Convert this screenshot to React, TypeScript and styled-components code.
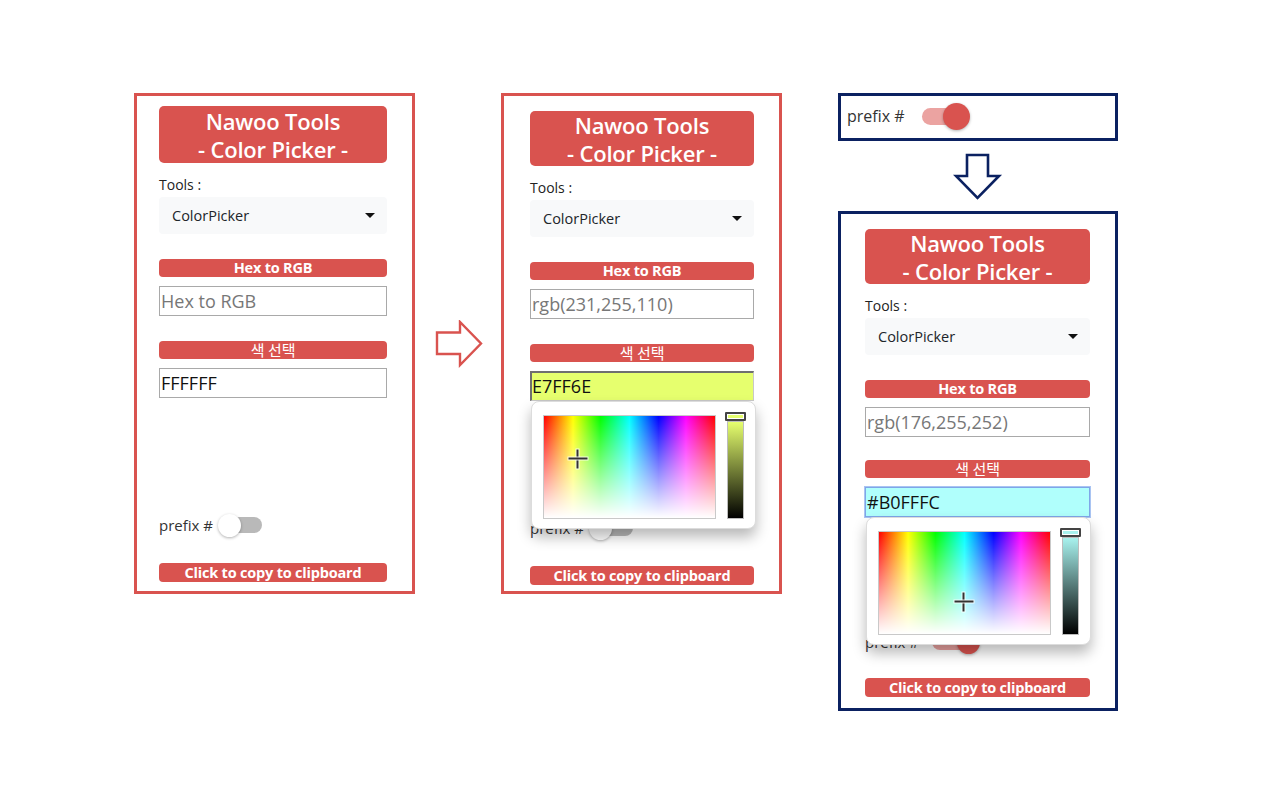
import React from "react";
import styled, { createGlobalStyle, css } from "styled-components";

const RED = "#d9534f";
const NAVY = "#0b2161";
const FONT = `"Open Sans", "Noto Sans CJK KR", sans-serif`;

const Global = createGlobalStyle`
  html, body { margin: 0; padding: 0; background: #ffffff; }
  body { font-family: ${FONT}; width: 1280px; height: 800px; overflow: hidden; }
  * { box-sizing: border-box; }
`;

const Stage = styled.div`
  display: flex;
  align-items: flex-start;
  padding: 93px 0 0 134px;
`;

const Panel = styled.div<{ $border: string; $w: number; $h: number; $padTop: number; $padLeft: number }>`
  width: ${(p) => p.$w}px;
  height: ${(p) => p.$h}px;
  border: 3px solid ${(p) => p.$border};
  padding: ${(p) => p.$padTop}px 25px 0 ${(p) => p.$padLeft}px;
  display: flex;
  flex-direction: column;
  background: #fff;
`;

const TitleBox = styled.div<{ $h: number }>`
  height: ${(p) => p.$h}px;
  background: ${RED};
  border-radius: 5px;
  color: #fff;
  font-weight: 600;
  font-size: 22px;
  line-height: 28px;
  letter-spacing: -0.2px;
  text-align: center;
  display: flex;
  flex-direction: column;
  justify-content: center;
`;

const Label = styled.div`
  margin-top: 12px;
  font-size: 14px;
  line-height: 20px;
  color: #222;
`;

const Select = styled.div`
  margin-top: 2px;
  height: 37px;
  background: #f8f9fa;
  border-radius: 4px;
  display: flex;
  align-items: center;
  justify-content: space-between;
  padding: 0 12px 0 13px;
  font-size: 14.5px;
  color: #212529;
`;

const Caret = styled.span`
  width: 0;
  height: 0;
  border-left: 5px solid transparent;
  border-right: 5px solid transparent;
  border-top: 5px solid #111;
`;

const Bar = styled.div<{ $mt: number; $h?: number; $fs?: number; $light?: boolean }>`
  margin-top: ${(p) => p.$mt}px;
  height: ${(p) => p.$h ?? 18}px;
  background: ${RED};
  border-radius: 4px;
  color: #fff;
  font-weight: ${(p) => (p.$light ? 400 : 700)};
  font-size: ${(p) => p.$fs ?? 14.5}px;
  line-height: ${(p) => p.$h ?? 18}px;
  text-align: center;
  letter-spacing: -0.2px;
`;

const Field = styled.div`
  position: relative;
  margin-top: 9px;
`;

const Input = styled.div<{ $bg?: string; $muted?: boolean; $variant?: "plain" | "inset" | "focus" }>`
  height: 30px;
  background: ${(p) => p.$bg ?? "#fff"};
  border: 1px solid #a9a9a9;
  font-size: 18px;
  line-height: 28px;
  padding-left: 1px;
  color: ${(p) => (p.$muted ? "#777" : "#111")};
  ${(p) =>
    p.$variant === "inset" &&
    css`
      border-width: 2px 1px 1px 2px;
      border-color: #6f6f6f #c8c8c8 #c8c8c8 #6f6f6f;
      line-height: 27px;
      padding-left: 0;
    `}
  ${(p) =>
    p.$variant === "focus" &&
    css`
      border: 1px solid #7fa6e8;
      box-shadow: 0 0 0 1px #a9c4f2;
    `}
`;

const Popup = styled.div`
  position: absolute;
  left: 1px;
  top: 30px;
  width: 225px;
  height: 128px;
  background: #fff;
  border: 1px solid #dcdcdc;
  border-radius: 8px;
  box-shadow: 0 8px 14px rgba(0, 0, 0, 0.28);
  display: flex;
  align-items: flex-start;
  padding: 13px 0 0 11px;
  z-index: 5;
`;

const SatArea = styled.div`
  position: relative;
  width: 173px;
  height: 104px;
  border: 1px solid #c9c9c9;
  background: linear-gradient(to bottom, rgba(255, 255, 255, 0) 0%, rgba(255, 255, 255, 0.45) 45%, #fff 100%),
    linear-gradient(to right, #ff0000 0%, #ffff00 17%, #00ff00 33%, #00ffff 50%, #0000ff 67%, #ff00ff 83%, #ff0000 100%);
`;

const Cross = styled.div`
  position: absolute;
  width: 19px;
  height: 19px;
  transform: translate(-50%, -50%);
  &::before,
  &::after {
    content: "";
    position: absolute;
    background: #333;
    box-shadow: 0 0 0 1px rgba(255, 255, 255, 0.8);
  }
  &::before {
    left: 8px;
    top: 0;
    width: 2px;
    height: 19px;
  }
  &::after {
    top: 8px;
    left: 0;
    width: 19px;
    height: 2px;
  }
`;

const Slider = styled.div<{ $color: string }>`
  position: relative;
  margin-left: 11px;
  margin-top: 6px;
  width: 17px;
  height: 98px;
  border: 1px solid #bcbcbc;
  background: linear-gradient(to bottom, ${(p) => p.$color}, #000);
`;

const Handle = styled.div<{ $color: string }>`
  position: absolute;
  left: -3px;
  top: -10px;
  width: 21px;
  height: 9px;
  border: 2px solid #444;
  border-radius: 1px;
  background: ${(p) => p.$color};
  box-shadow: inset 0 0 0 1px #fff;
`;

const PrefixRow = styled.div<{ $mt: number }>`
  margin-top: ${(p) => p.$mt}px;
  height: 26px;
  display: flex;
  align-items: center;
  font-size: 15px;
  color: #333;
`;

const Track = styled.div<{ $on: boolean; $w: number; $h: number }>`
  position: relative;
  width: ${(p) => p.$w}px;
  height: ${(p) => p.$h}px;
  border-radius: ${(p) => p.$h / 2}px;
  background: ${(p) => (p.$on ? "#eba3a1" : "#b9b9b9")};
  display: flex;
  align-items: center;
  justify-content: ${(p) => (p.$on ? "flex-end" : "flex-start")};
`;

const Knob = styled.div<{ $on: boolean; $d: number }>`
  flex: none;
  width: ${(p) => p.$d}px;
  height: ${(p) => p.$d}px;
  border-radius: 50%;
  background: ${(p) => (p.$on ? RED : "#fff")};
  box-shadow: 0 1px 3px rgba(0, 0, 0, 0.3);
  margin: ${(p) => (p.$on ? "0 -8px 0 0" : "0 0 0 -4px")};
`;

const SwitchWrap = styled.div<{ $ml: number }>`
  margin-left: ${(p) => p.$ml}px;
`;

const ArrowCell = styled.div`
  width: 86px;
  height: 501px;
  display: flex;
  align-items: center;
  justify-content: center;
`;

const Column = styled.div`
  margin-left: 56px;
  width: 280px;
  display: flex;
  flex-direction: column;
`;

const TopBox = styled.div`
  height: 48px;
  border: 3px solid ${NAVY};
  display: flex;
  align-items: center;
  padding: 0 0 2px 6px;
  font-size: 16px;
  color: #333;
`;

const DownCell = styled.div`
  height: 70px;
  display: flex;
  justify-content: center;
  padding-top: 12px;
  padding-right: 1px;
`;

type SwitchProps = { on: boolean; big?: boolean; ml: number };
const Switch = ({ on, big, ml }: SwitchProps) => (
  <SwitchWrap $ml={ml}>
    <Track $on={on} $w={big ? 40 : 40} $h={big ? 17 : 16}>
      <Knob $on={on} $d={big ? 27 : 23} />
    </Track>
  </SwitchWrap>
);

type PickerProps = { color: string; x: number; y: number };
const Picker = ({ color, x, y }: PickerProps) => (
  <Popup>
    <SatArea>
      <Cross style={{ left: x, top: y }} />
    </SatArea>
    <Slider $color={color}>
      <Handle $color={color} />
    </Slider>
  </Popup>
);

type ToolProps = {
  border: string;
  w: number;
  h: number;
  padTop: number;
  padLeft: number;
  titleH: number;
  rgb?: string;
  hex: string;
  bg?: string;
  variant?: "plain" | "inset" | "focus";
  picker?: PickerProps;
  prefixOn: boolean;
  compact?: boolean;
};

const ToolPanel = (p: ToolProps) => (
  <Panel $border={p.border} $w={p.w} $h={p.h} $padTop={p.padTop} $padLeft={p.padLeft}>
    <TitleBox $h={p.titleH}>
      <div>Nawoo Tools</div>
      <div>- Color Picker -</div>
    </TitleBox>
    <Label>Tools :</Label>
    <Select>
      <span>ColorPicker</span>
      <Caret />
    </Select>
    <Bar $mt={25}>Hex to RGB</Bar>
    <Field>
      <Input $muted>{p.rgb ?? "Hex to RGB"}</Input>
    </Field>
    <Bar $mt={p.compact ? 23 : 25} $light $fs={15}>
      색 선택
    </Bar>
    <Field>
      <Input $bg={p.bg} $variant={p.variant}>
        {p.hex}
      </Input>
      {p.picker && <Picker {...p.picker} />}
    </Field>
    <PrefixRow $mt={p.compact ? 112 : 114}>
      prefix #
      <Switch on={p.prefixOn} ml={p.prefixOn ? 13 : 9} />
    </PrefixRow>
    <Bar $mt={p.compact ? 23 : 25} $h={19}>
      Click to copy to clipboard
    </Bar>
  </Panel>
);

const RightArrow = () => (
  <svg width="48" height="48" viewBox="0 0 48 48" style={{ marginLeft: 1 }}>
    <path d="M2 12.5 H25 V2 L46 23.5 L25 45 V34 H2 Z" fill="#fff" stroke={RED} strokeWidth="2.4" strokeLinejoin="miter" />
  </svg>
);

const DownArrow = () => (
  <svg width="50" height="48" viewBox="0 0 50 48">
    <path d="M14 2 H35 V23 H46 L24.5 45 L3 23 H14 Z" fill="#fff" stroke={NAVY} strokeWidth="2.6" strokeLinejoin="miter" />
  </svg>
);

export default function App() {
  return (
    <>
      <Global />
      <Stage>
        <ToolPanel
          border={RED}
          w={281}
          h={501}
          padTop={10}
          padLeft={22}
          titleH={57}
          hex="FFFFFF"
          prefixOn={false}
        />
        <ArrowCell>
          <RightArrow />
        </ArrowCell>
        <ToolPanel
          border={RED}
          w={281}
          h={501}
          padTop={15}
          padLeft={26}
          titleH={55}
          rgb="rgb(231,255,110)"
          hex="E7FF6E"
          bg="#e6ff6e"
          variant="inset"
          picker={{ color: "#e6ff6e", x: 34, y: 43 }}
          prefixOn={false}
        />
        <Column>
          <TopBox>
            prefix #
            <Switch on big ml={17} />
          </TopBox>
          <DownCell>
            <DownArrow />
          </DownCell>
          <ToolPanel
            border={NAVY}
            w={280}
            h={500}
            padTop={15}
            padLeft={24}
            titleH={55}
            rgb="rgb(176,255,252)"
            hex="#B0FFFC"
            bg="#b0fffc"
            variant="focus"
            picker={{ color: "#a8f2ee", x: 85, y: 70 }}
            prefixOn
            compact
          />
        </Column>
      </Stage>
    </>
  );
}
